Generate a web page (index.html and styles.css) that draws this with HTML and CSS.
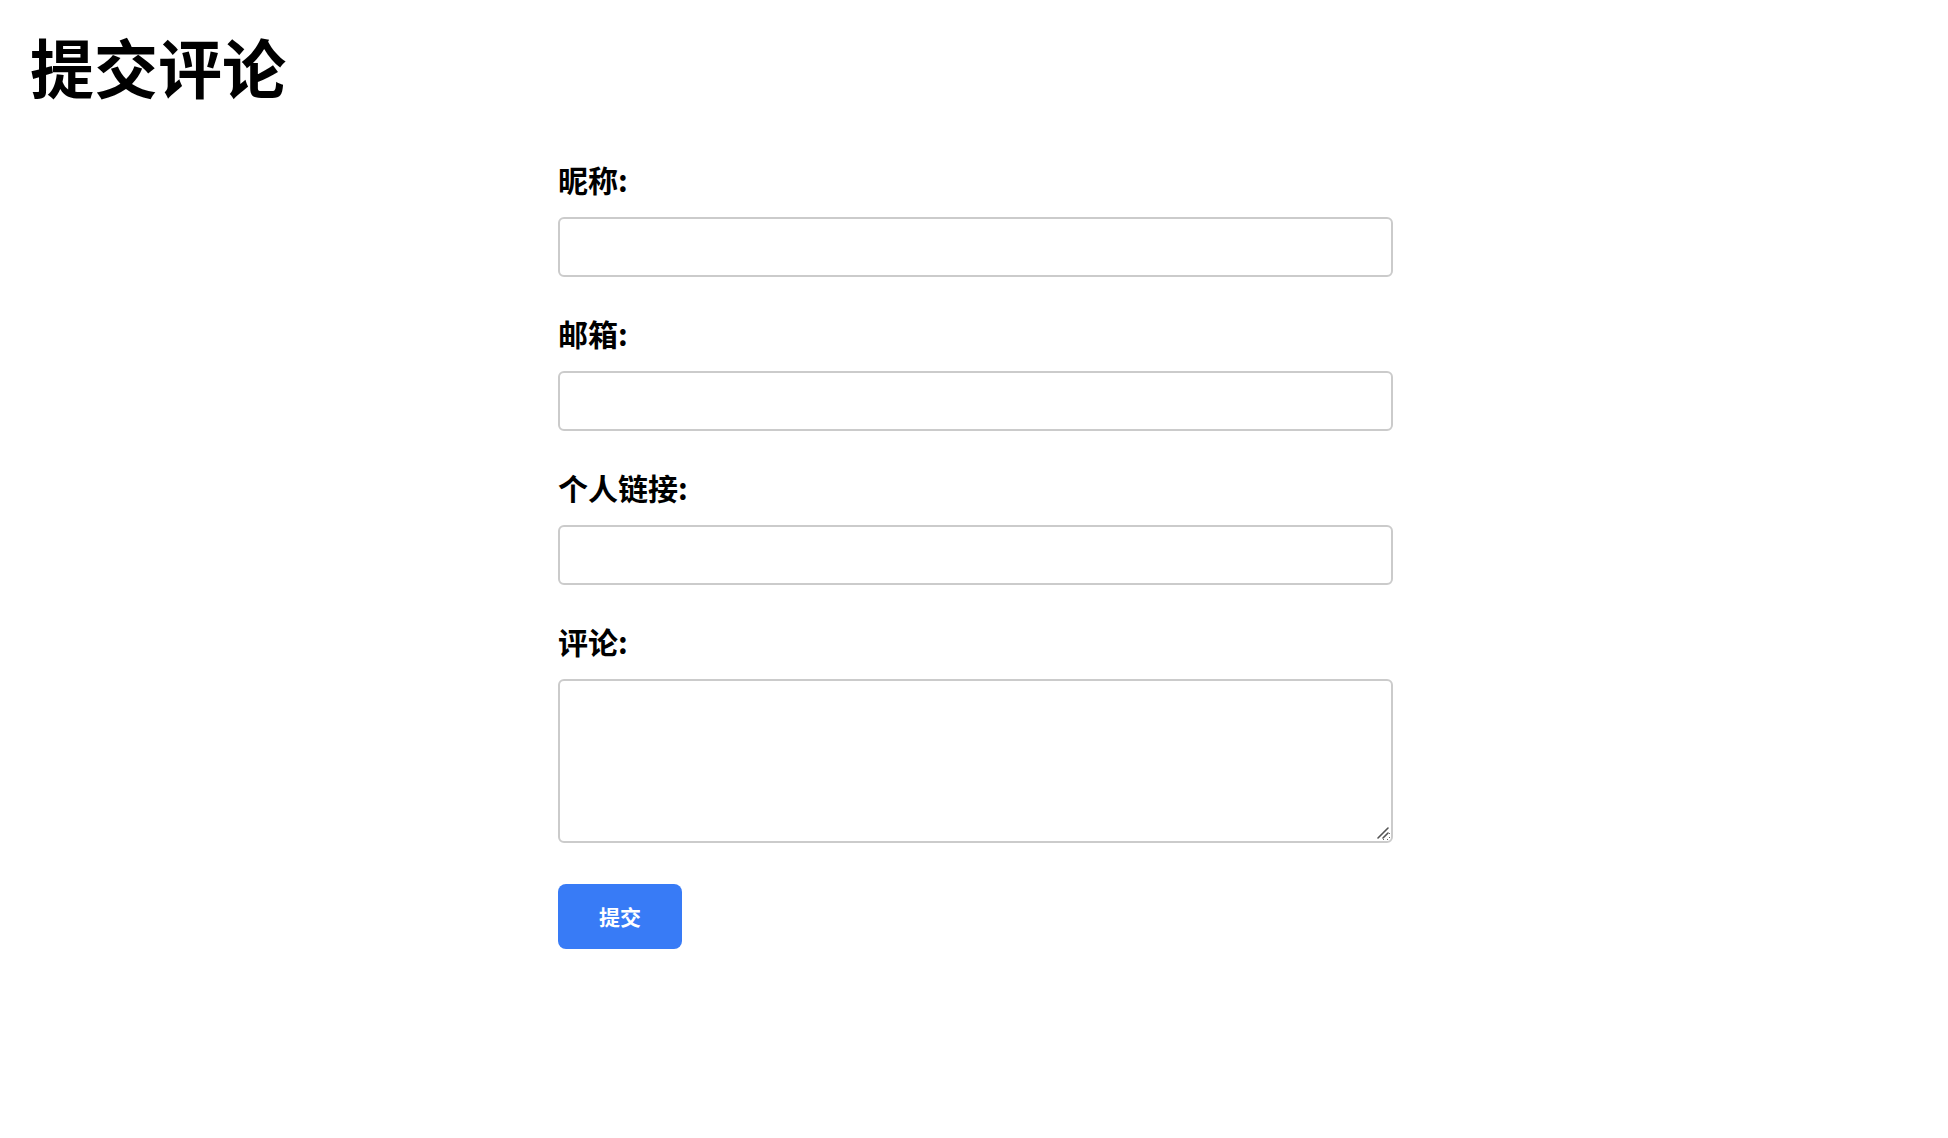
FILE: index.html
```html
<!doctype html>
<html lang="zh-CN">
<head>
    <meta charset="UTF-8">
    <meta name="viewport" content="width=device-width, initial-scale=1.0">
    <title>提交评论</title>
    <link rel="stylesheet" href="styles.css">
</head>
<body>
    <div class="page">
        <h1 class="title">提交评论</h1>
        <!--评论表单-->
        <form class="comment-form" onsubmit="return false">
            <div class="field">
                <label for="nickname">昵称:</label>
                <input type="text" id="nickname" name="nickname">
            </div>
            <div class="field">
                <label for="email">邮箱:</label>
                <input type="email" id="email" name="email">
            </div>
            <div class="field">
                <label for="website">个人链接:</label>
                <input type="url" id="website" name="website">
            </div>
            <div class="field">
                <label for="comment">评论:</label>
                <div class="area-wrap">
                    <textarea id="comment" name="comment"></textarea>
                    <!--右下角拖拽标记-->
                    <svg class="grip" width="12" height="12" viewBox="0 0 12 12">
                        <path d="M1 11 L11 1 M6 11 L11 6" stroke="#555" stroke-width="1.6" stroke-linecap="round"/>
                    </svg>
                </div>
            </div>
            <button type="submit" class="submit">提交</button>
        </form>
    </div>
</body>
</html>
```

FILE: styles.css
```css
body{
    margin: 0;
    background: #fff;
    color: #000;
    font-family: "Noto Sans CJK SC", "Noto Sans", sans-serif;
}
/*最外层*/
.page{
    padding: 27px 27px 27px 30px;
}
/*标题*/
.title{
    margin: 0;
    font-size: 64px;
    line-height: 1.2;
    font-weight: 700;
}
/*表单居中*/
.comment-form{
    width: 835px;
    margin: 53px auto 0;
}
.field{
    margin-bottom: 34px;
}
.field label{
    display: block;
    font-size: 30px;
    line-height: 1.5;
    font-weight: 700;
    margin-bottom: 15px;
}
.field input,
.field textarea{
    display: block;
    width: 100%;
    box-sizing: border-box;
    border: 2px solid #cbcbcb;
    border-radius: 6px;
    font-family: inherit;
    font-size: 20px;
    padding: 8px 12px;
    margin: 0;
    outline: none;
}
.field input{
    height: 60px;
}
.area-wrap{
    position: relative;
}
.field textarea{
    height: 164px;
    resize: vertical;
}
.grip{
    position: absolute;
    right: 4px;
    bottom: 4px;
    pointer-events: none;
    background: #fff;
}
/*最后一个输入框与按钮的间距*/
.field:last-of-type{
    margin-bottom: 41px;
}
/*提交按钮*/
.submit{
    height: 65px;
    padding: 0 41px;
    border: none;
    border-radius: 8px;
    background: #387bf6;
    color: #fff;
    font-family: inherit;
    font-size: 21px;
    font-weight: 600;
    cursor: pointer;
}
```
